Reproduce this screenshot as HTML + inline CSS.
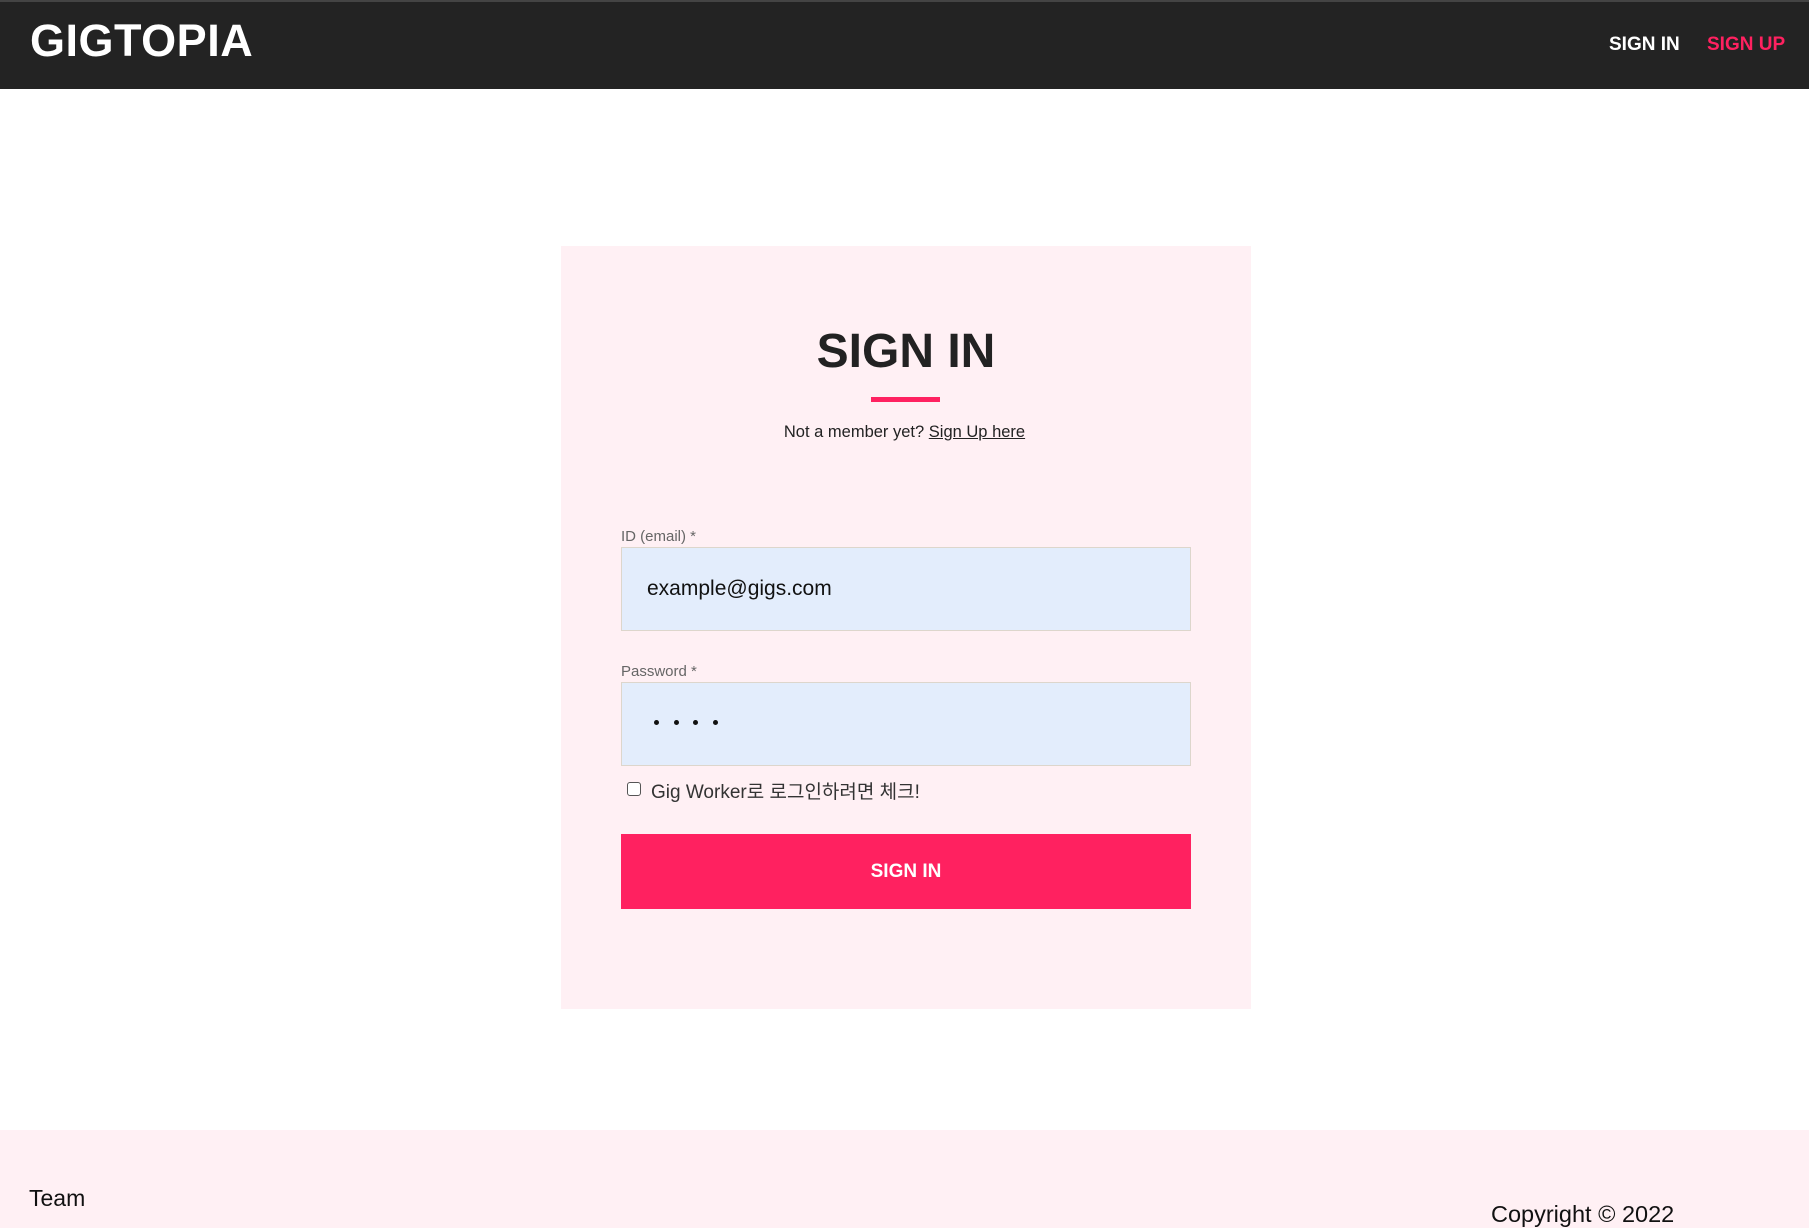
<!DOCTYPE html>
<html><head><meta charset="utf-8"><style>
*{margin:0;padding:0;box-sizing:border-box}
body{width:1809px;height:1228px;position:relative;background:#fff;font-family:"Liberation Sans","Noto Sans CJK KR",sans-serif;overflow:hidden;color:#222}
.hdr{position:absolute;left:0;top:0;width:1809px;height:89px;background:#232323;border-top:2px solid #444}
.logo{position:absolute;left:30px;top:13px;font-size:45px;font-weight:bold;color:#fff;letter-spacing:0.5px}
.nav{position:absolute;top:32px;font-size:19px;font-weight:bold}
.card{position:absolute;left:561px;top:246px;width:690px;height:763px;background:#fff0f4}
.title{position:absolute;left:0;width:690px;top:324px;text-align:center;font-size:48px;font-weight:bold;color:#222}
.ul{position:absolute;left:871px;top:397px;width:69px;height:5px;background:#ff2160}
.sub{position:absolute;left:0;width:1809px;top:423px;text-align:center;font-size:16.5px;color:#222}
.lbl{position:absolute;left:621px;font-size:15px;color:#666}
.inp{position:absolute;left:621px;width:570px;height:84px;background:#e3edfc;border:1px solid #ddd6cc;font-size:21px;padding-left:25px;line-height:82px;color:#111}
.btn{position:absolute;left:621px;top:834px;width:570px;height:75px;background:#ff2160;color:#fff;font-size:19px;font-weight:bold;text-align:center;line-height:75px}
.ft{position:absolute;left:0;top:1130px;width:1809px;height:98px;background:#fff0f4}
.dot{position:absolute;top:720px;width:5px;height:5px;border-radius:50%;background:#111}
</style></head><body>
<div class="hdr"><div class="logo">GIGTOPIA</div>
<div class="nav" style="left:1609px;color:#fff">SIGN IN</div>
<div class="nav" style="left:1707px;color:#ff2160">SIGN UP</div></div>
<div class="card"></div>
<div class="title" style="left:561px">SIGN IN</div>
<div class="ul"></div>
<div class="sub">Not a member yet? <span style="text-decoration:underline">Sign Up here</span></div>
<div class="lbl" style="top:528px">ID (email) *</div>
<div class="inp" style="top:547px">example@gigs.com</div>
<div class="lbl" style="top:663px">Password *</div>
<div class="inp" style="top:682px"></div>
<div class="dot" style="left:654px"></div>
<div class="dot" style="left:674px"></div>
<div class="dot" style="left:693px"></div>
<div class="dot" style="left:713px"></div>
<div style="position:absolute;left:627px;top:782px;width:14px;height:14px;border:1.5px solid #555;border-radius:3px;background:#fff"></div>
<div style="position:absolute;left:651px;top:777px;font-size:19px;color:#333">Gig Worker로 로그인하려면 체크!</div>
<div class="btn">SIGN IN</div>
<div class="ft"></div>
<div style="position:absolute;left:29px;top:1185px;font-size:23px;color:#111">Team</div>
<div style="position:absolute;left:1491px;top:1201px;font-size:23.5px;color:#111">Copyright © 2022</div>
</body></html>
